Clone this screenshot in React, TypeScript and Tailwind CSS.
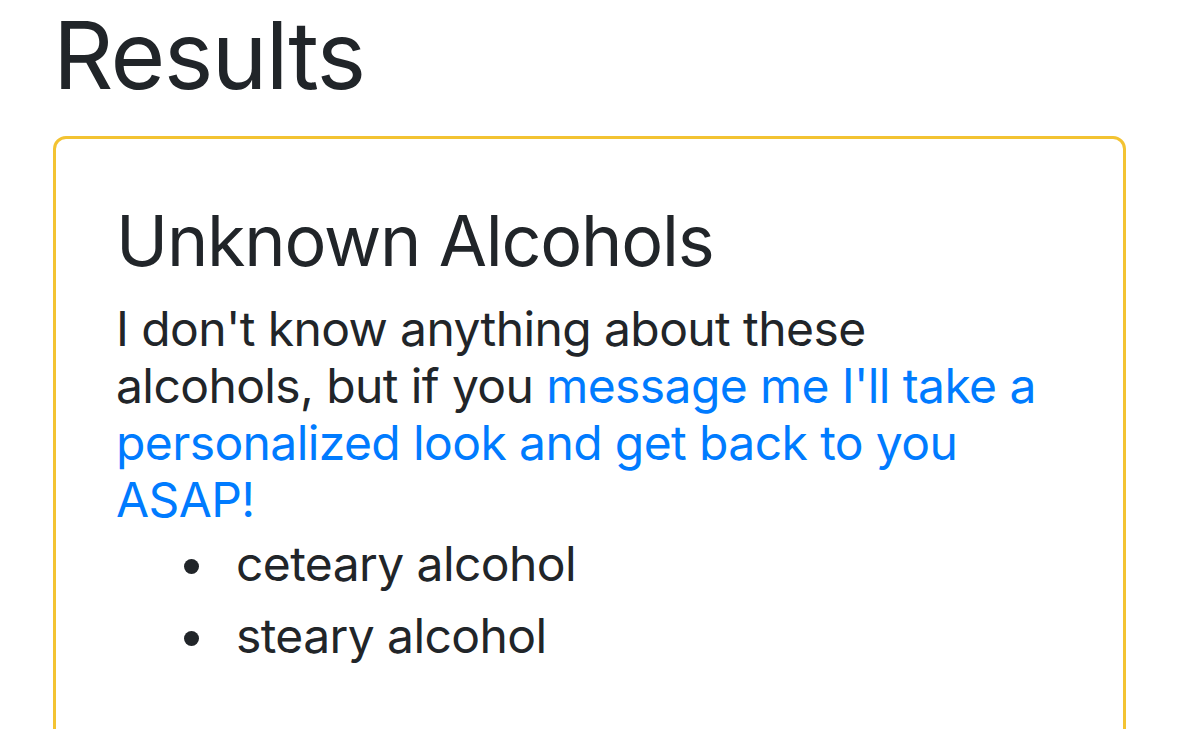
import React from "react";

const unknown = ["ceteary alcohol", "steary alcohol"];

export default function App() {
  return (
    <div className="min-h-screen bg-white px-[53px] font-['Inter','Liberation_Sans',sans-serif] text-[#212529]">
      <h1 className="text-[94px] leading-[110px] font-normal tracking-[-1.6px]">Results</h1>

      <div className="mt-[26px] rounded-[13px] border-[3px] border-[#f3c332] px-[60px] pt-[60px] pb-[200px]">
        <h2 className="text-[70px] leading-[84px] font-normal tracking-[-1.2px]">Unknown Alcohols</h2>
        <p className="mt-[17px] text-[48px] leading-[57px] tracking-[-0.6px]">
          I don't know anything about these alcohols, but if you{" "}
          <a href="#" className="text-[#007bff]">
            message me I'll take a personalized look and get back to you ASAP!
          </a>
        </p>
        <ul className="pl-[68px] text-[48px] leading-[72px] tracking-[-0.6px]">
          {unknown.map((name) => (
            <li key={name} className="flex items-center">
              <span className="mt-[4px] mr-[37px] h-[15px] w-[15px] shrink-0 rounded-full bg-[#212529]" />
              {name}
            </li>
          ))}
        </ul>
      </div>
    </div>
  );
}
